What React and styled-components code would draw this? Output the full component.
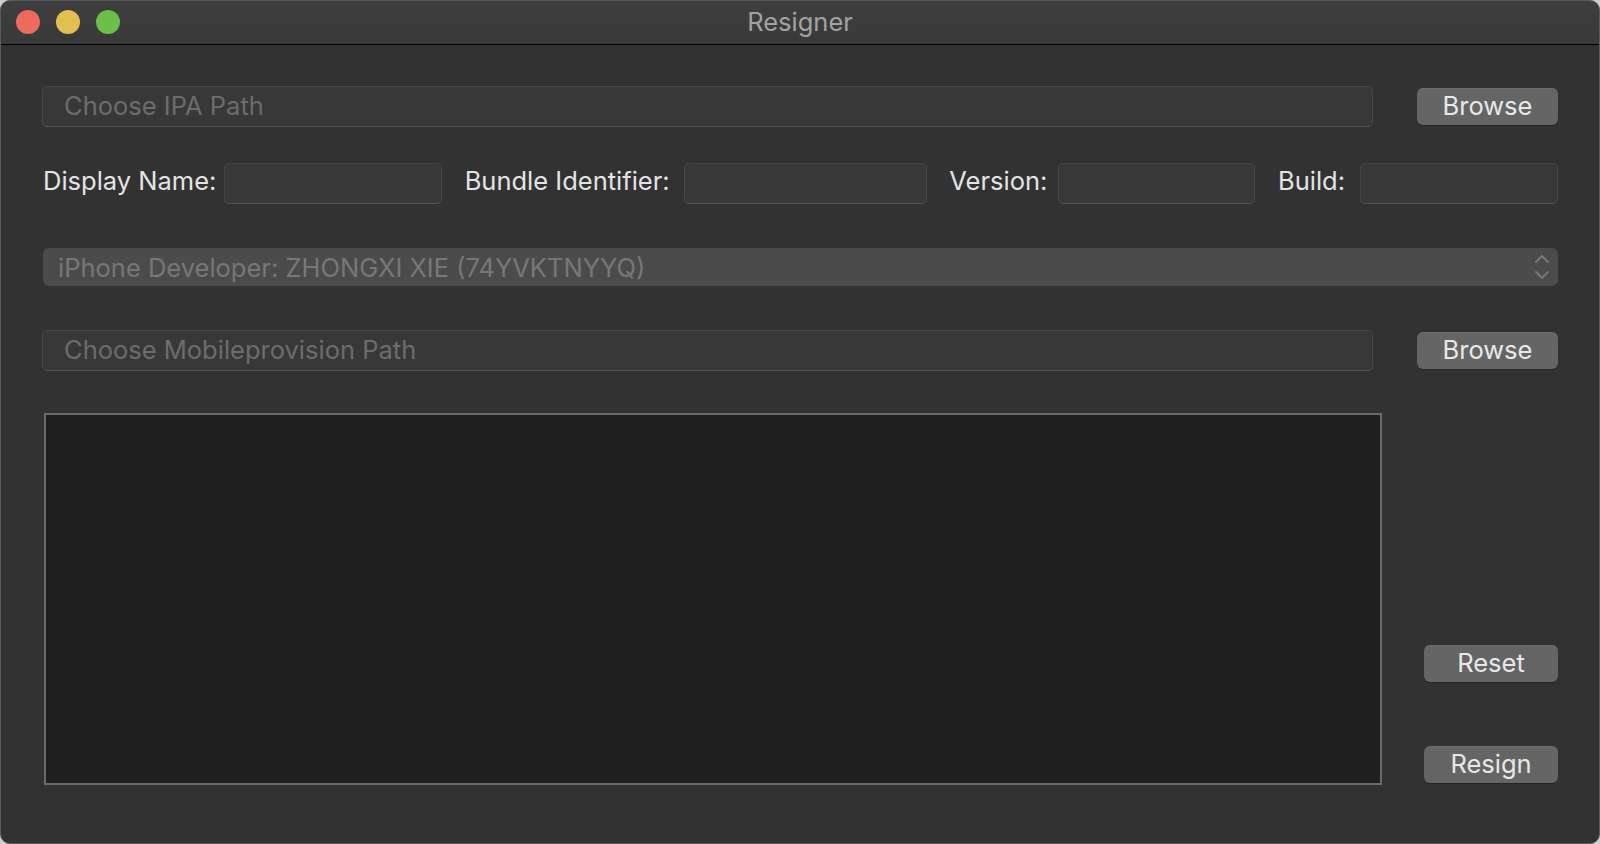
import React from 'react';
import styled, { createGlobalStyle } from 'styled-components';

const GlobalStyle = createGlobalStyle`
  html, body {
    margin: 0;
    padding: 0;
    background: #cfcfcf;
  }
  * {
    box-sizing: border-box;
  }
`;

const Window = styled.div`
  width: 1600px;
  height: 844px;
  display: flex;
  flex-direction: column;
  background: #323232;
  border: 1px solid #5a5a5a;
  border-radius: 10px;
  overflow: hidden;
  font-family: Inter, "Open Sans", "Liberation Sans", sans-serif;
`;

const TitleBar = styled.div`
  position: relative;
  height: 44px;
  flex: none;
  display: flex;
  align-items: center;
  justify-content: center;
  background: linear-gradient(#3e3e3e, #393939);
  border-bottom: 1px solid #000;
`;

const Lights = styled.div`
  position: absolute;
  left: 15px;
  top: 9px;
  display: flex;
  gap: 16px;
`;

const Light = styled.span`
  width: 24px;
  height: 24px;
  border-radius: 50%;
  background: ${p => p.$color};
`;

const Title = styled.div`
  color: #a2a2a2;
  font-size: 25.5px;
  padding-bottom: 2px;
`;

const Content = styled.div`
  flex: 1;
  display: flex;
  flex-direction: column;
  padding: 41px 41px 0 41px;
`;

const Row = styled.div`
  display: flex;
  align-items: center;
  margin-top: ${p => p.$gap || 0}px;
  gap: ${p => p.$spread ? 0 : 44}px;
  justify-content: ${p => p.$spread ? 'space-between' : 'flex-start'};
`;

const PathField = styled.div`
  flex: 1;
  height: 41px;
  display: flex;
  align-items: center;
  padding-left: 21px;
  padding-bottom: 2px;
  background: #383838;
  border: 1px solid #474747;
  border-bottom-color: #525252;
  border-radius: 5px;
  color: #6c6c6c;
  font-size: 25.5px;
`;

const Button = styled.div`
  width: ${p => p.$width || 141}px;
  height: 37px;
  flex: none;
  display: flex;
  align-items: center;
  justify-content: center;
  padding-bottom: 2px;
  background: #656565;
  border-radius: 6px;
  box-shadow: 0 1px 0 rgba(0, 0, 0, 0.25), inset 0 1px 0 rgba(255, 255, 255, 0.06);
  color: #e8e8e8;
  font-size: 25.5px;
`;

const Group = styled.div`
  width: ${p => p.$width}px;
  display: flex;
  align-items: center;
  justify-content: space-between;
`;

const Label = styled.span`
  color: #e4e4e4;
  font-size: 25.5px;
  padding-left: 1px;
  padding-bottom: 6px;
`;

const Field = styled.div`
  width: ${p => p.$width}px;
  height: 41px;
  background: #383838;
  border: 1px solid #474747;
  border-bottom-color: #525252;
  border-radius: 5px;
`;

const Popup = styled.div`
  height: 38px;
  margin-left: 1px;
  display: flex;
  align-items: center;
  justify-content: space-between;
  padding: 0 7px 0 15px;
  background: #4b4b4b;
  border-radius: 6px;
  color: #777;
  font-size: 25.5px;
`;

const Bottom = styled.div`
  display: flex;
  margin-top: 42px;
  gap: 42px;
`;

const LogArea = styled.div`
  width: 1338px;
  height: 372px;
  margin-left: 2px;
  background: #1f1f1f;
  border: 2px solid #6a6a6a;
`;

const Side = styled.div`
  flex: 1;
  display: flex;
  flex-direction: column;
  justify-content: flex-end;
  align-items: flex-end;
  gap: 64px;
  padding-bottom: 2px;
`;

const Chevrons = () => (
  <svg width="18" height="30" viewBox="0 0 18 30" fill="none" stroke="#777" strokeWidth="2" strokeLinecap="round" strokeLinejoin="round">
    <path d="M3 10 L9 4 L15 10" />
    <path d="M3 20 L9 26 L15 20" />
  </svg>
);

export default function App() {
  return (
    <>
      <GlobalStyle />
      <Window>
        <TitleBar>
          <Lights>
            <Light $color="#ec6a5e" />
            <Light $color="#e2c04f" />
            <Light $color="#6bc04a" />
          </Lights>
          <Title>Resigner</Title>
        </TitleBar>
        <Content>
          <Row>
            <PathField>Choose IPA Path</PathField>
            <Button>Browse</Button>
          </Row>
          <Row $gap={36} $spread>
            <Group $width={400}>
              <Label>Display Name:</Label>
              <Field $width={218} />
            </Group>
            <Group $width={463}>
              <Label>Bundle Identifier:</Label>
              <Field $width={243} />
            </Group>
            <Group $width={307}>
              <Label>Version:</Label>
              <Field $width={197} />
            </Group>
            <Group $width={281}>
              <Label>Build:</Label>
              <Field $width={198} />
            </Group>
          </Row>
          <Row $gap={44} $spread style={{ display: 'block' }}>
            <Popup>
              <span>iPhone Developer: ZHONGXI XIE (74YVKTNYYQ)</span>
              <Chevrons />
            </Popup>
          </Row>
          <Row $gap={44}>
            <PathField>Choose Mobileprovision Path</PathField>
            <Button>Browse</Button>
          </Row>
          <Bottom>
            <LogArea />
            <Side>
              <Button $width={134}>Reset</Button>
              <Button $width={134}>Resign</Button>
            </Side>
          </Bottom>
        </Content>
      </Window>
    </>
  );
}
